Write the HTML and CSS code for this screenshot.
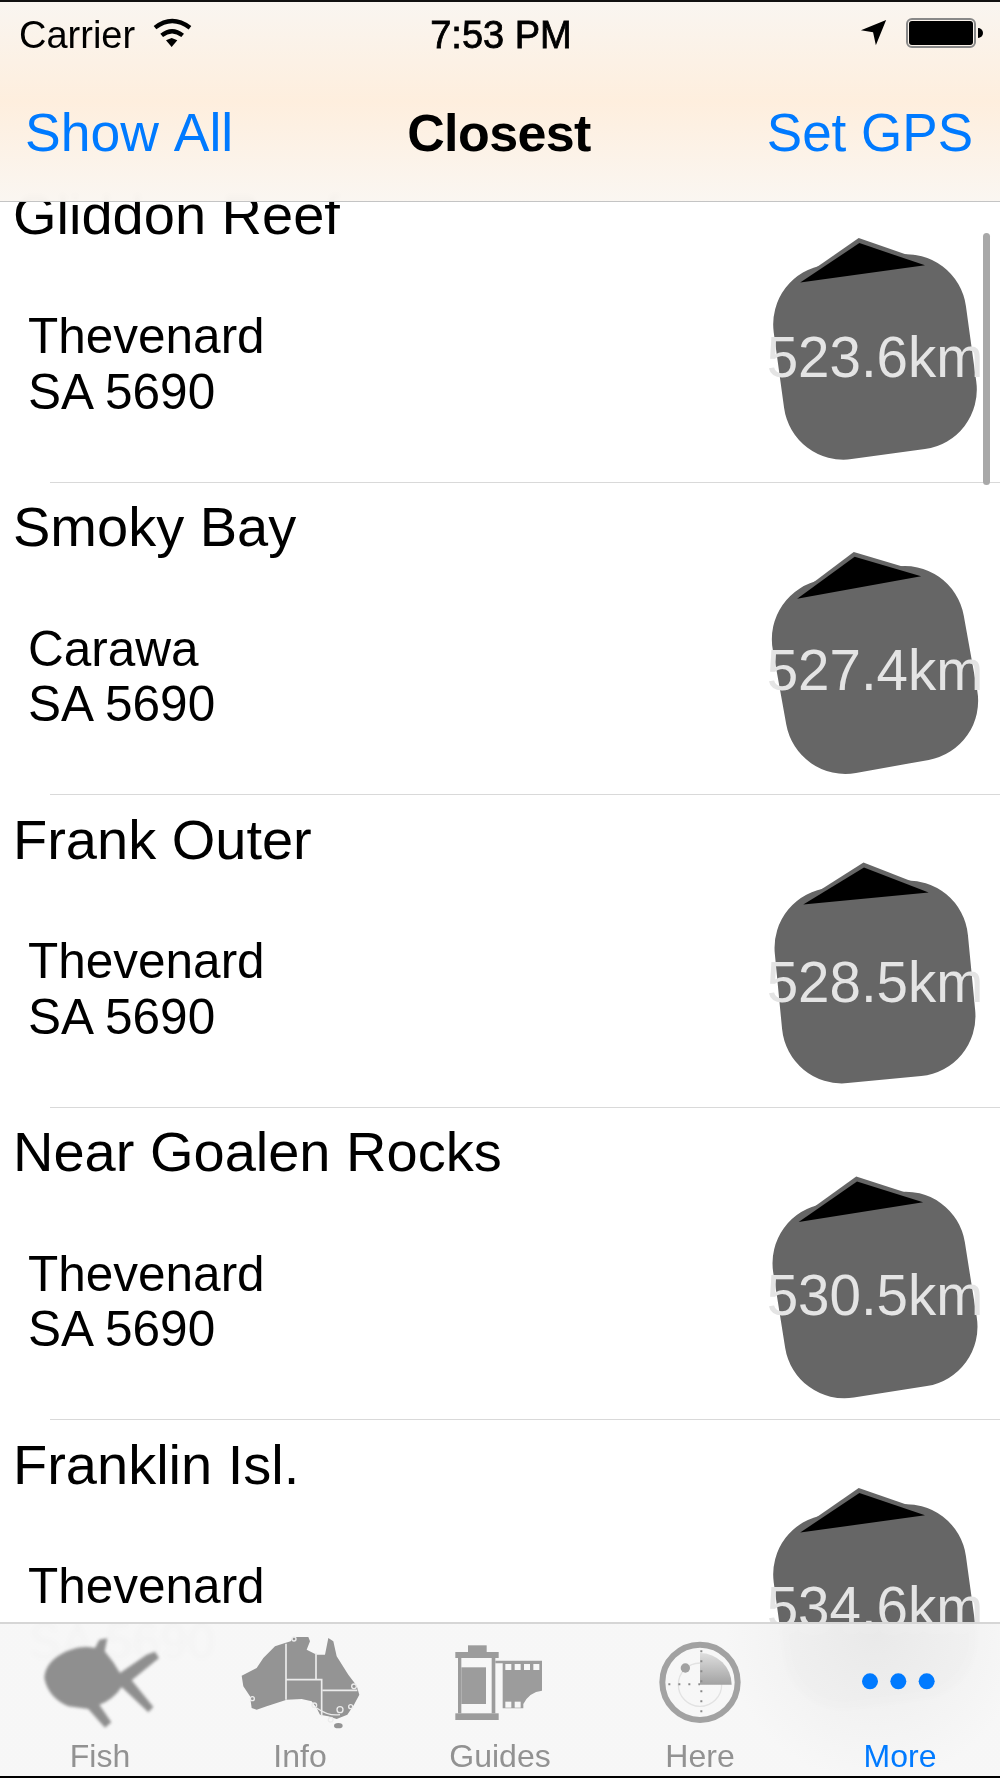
FILE: index.html
```html
<!DOCTYPE html>
<html lang="en">
<head>
  <meta charset="UTF-8">
  <meta name="viewport" content="width=device-width, initial-scale=1.0">
  <link rel="stylesheet" href="styles.css">
  <title>Closest</title>
</head>
<body>
  <svg class="defs" width="0" height="0">
    <symbol id="pointer" viewBox="-120 -130 240 260">
      <polygon points="0,-120 -79,-80 79,-80" fill="#666"/>
      <rect x="-97" y="-98" width="194" height="196" rx="60" fill="#666"/>
      <polygon points="0,-115 -64,-84 62,-84" fill="#000"/>
    </symbol>
  </svg>

  <div class="phone">
    <header class="top-bar">
      <div class="status-bar">
        <div class="status-left">
          <span>Carrier</span>
          <svg class="wifi" viewBox="0 0 210 150">
            <path d="M45 65 Q96 25 150 65" fill="none" stroke="#000" stroke-width="13"/>
            <path d="M65 88 Q96 63 128 88" fill="none" stroke="#000" stroke-width="13"/>
            <polygon points="78,103 95,96 112,103 95,123"/>
          </svg>
        </div>
        <span class="clock">7:53 PM</span>
        <div class="status-right">
          <svg class="arrow" viewBox="0 0 30 30"><polygon points="1,11 28,0 17,27 14,13"/></svg>
          <div class="battery"><div class="battery-fill"></div></div>
          <div class="battery-tip"></div>
        </div>
      </div>
      <nav class="nav-bar">
        <a class="nav-btn show-all">Show All</a>
        <h1 class="nav-title">Closest</h1>
        <a class="nav-btn">Set GPS</a>
      </nav>
    </header>

    <main class="list">
      <div class="row">
        <div class="row-title">Gliddon Reef</div>
        <div class="row-address">Thevenard<br>SA 5690</div>
        <div class="dist">
          <svg class="dist-shape" style="transform: rotate(-7.8deg)"><use href="#pointer"/></svg>
          <span class="dist-text">523.6km</span>
        </div>
      </div>
      <div class="sep"></div>
      <div class="row">
        <div class="row-title">Smoky Bay</div>
        <div class="row-address">Carawa<br>SA 5690</div>
        <div class="dist">
          <svg class="dist-shape" style="transform: rotate(-10.2deg)"><use href="#pointer"/></svg>
          <span class="dist-text">527.4km</span>
        </div>
      </div>
      <div class="sep"></div>
      <div class="row">
        <div class="row-title">Frank Outer</div>
        <div class="row-address">Thevenard<br>SA 5690</div>
        <div class="dist">
          <svg class="dist-shape" style="transform: rotate(-5.5deg)"><use href="#pointer"/></svg>
          <span class="dist-text">528.5km</span>
        </div>
      </div>
      <div class="sep"></div>
      <div class="row">
        <div class="row-title">Near Goalen Rocks</div>
        <div class="row-address">Thevenard<br>SA 5690</div>
        <div class="dist">
          <svg class="dist-shape" style="transform: rotate(-9deg)"><use href="#pointer"/></svg>
          <span class="dist-text">530.5km</span>
        </div>
      </div>
      <div class="sep"></div>
      <div class="row">
        <div class="row-title">Franklin Isl.</div>
        <div class="row-address">Thevenard<br>SA 5690</div>
        <div class="dist">
          <svg class="dist-shape" style="transform: rotate(-7.8deg)"><use href="#pointer"/></svg>
          <span class="dist-text">534.6km</span>
        </div>
      </div>
    </main>

    <div class="scrollbar"></div>

    <footer class="tab-bar">
      <div class="tab">
        <svg class="tab-icon fish" viewBox="90 100 420 300">
          <path fill="#8f8f8f" d="M133 235 Q135 185 200 155 Q245 135 285 145 L298 120 L322 116 L314 155 Q340 185 360 220 L440 165 L465 156 L477 175 L395 242 L460 322 L445 338 L365 262 Q340 300 298 315 L334 368 L315 384 L265 328 L205 320 Q145 295 133 235 Z"/>
        </svg>
        <span class="tab-label">Fish</span>
      </div>
      <div class="tab">
        <svg class="tab-icon" viewBox="690 100 420 300">
          <path fill="#949494" d="M725 228 L770 205 L790 175 L825 140 L855 130 L872 125 L880 112 L925 112 L930 125 L920 150 L950 165 L975 165 L985 115 L1000 125 L1010 170 L1045 225 L1070 258 L1078 285 L1062 315 L1042 345 L1010 358 L985 350 L960 345 L950 325 L935 305 L905 298 L860 300 L800 320 L770 330 L755 325 L750 290 L730 260 Z"/>
          <ellipse cx="1015" cy="378" rx="13" ry="8" fill="#949494"/>
          <path fill="none" stroke="#ececec" stroke-width="5" d="M858 132 V300 M948 160 V240 M860 240 H965 V350 M968 272 H1072"/>
          <g fill="none" stroke="#ececec" stroke-width="4">
            <circle cx="882" cy="118" r="6"/>
            <circle cx="757" cy="297" r="6"/>
            <circle cx="943" cy="317" r="7"/>
            <circle cx="1020" cy="330" r="9"/>
            <circle cx="1052" cy="321" r="6"/>
            <circle cx="1062" cy="260" r="7"/>
            <circle cx="992" cy="360" r="7"/>
            <path d="M950 325 Q985 350 1020 345"/>
          </g>
        </svg>
        <span class="tab-label">Info</span>
      </div>
      <div class="tab">
        <svg class="tab-icon" viewBox="-30 9 420 300">
          <g fill="#9c9c9c">
            <rect x="84" y="46" width="56" height="20"/>
            <rect x="46" y="66" width="130" height="18"/>
            <rect x="46" y="250" width="130" height="20"/>
            <rect x="54" y="84" width="10" height="166"/>
            <rect x="155" y="84" width="11" height="166"/>
            <rect x="64" y="112" width="74" height="110"/>
            <path d="M166 92 H306 V182 Q268 186 250 222 V235 H188 V100 H166 Z"/>
          </g>
          <g fill="#f7f7f7">
            <rect x="196" y="102" width="18" height="18"/>
            <rect x="224" y="102" width="18" height="18"/>
            <rect x="252" y="102" width="18" height="18"/>
            <rect x="280" y="102" width="18" height="18"/>
            <rect x="196" y="215" width="18" height="18"/>
            <rect x="224" y="215" width="18" height="18"/>
          </g>
        </svg>
        <span class="tab-label">Guides</span>
      </div>
      <div class="tab">
        <svg class="tab-icon" viewBox="390 100 420 300">
          <defs>
            <linearGradient id="sweep" x1="0" y1="0" x2="0" y2="1">
              <stop offset="0" stop-color="#dedede"/>
              <stop offset="1" stop-color="#a2a2a2"/>
            </linearGradient>
          </defs>
          <circle cx="600" cy="248" r="113" fill="none" stroke="#a2a2a2" stroke-width="18"/>
          <circle cx="600" cy="255" r="65" fill="none" stroke="#e2e2e2" stroke-width="4"/>
          <path d="M600 160 A95 95 0 0 1 695 255 H600 Z" fill="url(#sweep)"/>
          <circle cx="556" cy="205" r="14" fill="#a2a2a2"/>
          <path d="M604 152 V345 M505 254 H600" fill="none" stroke="#8a8a8a" stroke-width="6" stroke-dasharray="6 24"/>
        </svg>
        <span class="tab-label">Here</span>
      </div>
      <div class="tab active">
        <svg class="tab-icon" viewBox="990 100 420 300">
          <circle cx="1110" cy="245" r="24" fill="#007aff"/>
          <circle cx="1195" cy="245" r="24" fill="#007aff"/>
          <circle cx="1280" cy="245" r="24" fill="#007aff"/>
        </svg>
        <span class="tab-label">More</span>
      </div>
    </footer>
  </div>
</body>
</html>
```

FILE: styles.css
```css
body {
  margin: 0;
  padding: 0;
  background-color: #fff;
  font-family: "Liberation Sans", Arial, sans-serif;
  color: #000;
}

.defs {
  position: absolute;
}

.phone {
  position: relative;
  height: 1778px;
  overflow: hidden;
  background-color: #fff;
  filter: blur(0.5px);
}

/* top bars sit over the scrolled list */
.top-bar {
  position: absolute;
  top: 0;
  left: 0;
  right: 0;
  z-index: 2;
  height: 202px;
  box-sizing: border-box;
  border-top: 2px solid #111;
  border-bottom: 1px solid #c4c4c4;
  background: linear-gradient(rgba(249, 245, 240, 0.98), rgba(254, 238, 221, 0.98) 50%, rgba(250, 246, 241, 0.98));
  backdrop-filter: blur(3px);
}

.status-bar {
  display: grid;
  grid-template-columns: 1fr auto 1fr;
  align-items: center;
  height: 46px;
  padding: 10px 17px 0 19px;
  font-size: 38px;
  line-height: 46px;
}

.status-left {
  display: flex;
  align-items: center;
}

.wifi {
  width: 70px;
  height: 50px;
  margin-left: 5px;
  margin-top: -9px;
}

.clock {
  -webkit-text-stroke: 0.8px #000;
}

.status-right {
  display: flex;
  align-items: center;
  justify-content: flex-end;
}

.arrow {
  width: 28px;
  height: 28px;
  margin-right: 18px;
  margin-top: -2px;
}

.battery {
  width: 70px;
  height: 30px;
  box-sizing: border-box;
  padding: 1px;
  border: 2px solid #888;
  border-radius: 6px;
  margin-top: -4px;
}

.battery-fill {
  height: 100%;
  background-color: #000;
  border-radius: 3px;
}

.battery-tip {
  width: 5px;
  height: 10px;
  margin-left: 2px;
  margin-top: -4px;
  background-color: #000;
  border-radius: 0 5px 5px 0;
}

.nav-bar {
  display: grid;
  grid-template-columns: 1fr auto 1fr;
  align-items: center;
  margin-top: 45px;
  padding: 0 27px 0 25px;
  font-size: 53px;
  line-height: 60px;
}

.nav-btn {
  color: #007aff;
}

.nav-btn:last-child {
  text-align: right;
}

.show-all {
  font-kerning: none;
  font-size: 53.5px;
}

.nav-title {
  margin: 0;
  font-size: 52px;
  letter-spacing: -0.6px;
  font-weight: bold;
}

.list {
  margin-top: 170px;
}

.row {
  display: grid;
  grid-template-columns: 1fr 210px;
  grid-template-rows: 66px auto;
  height: 311.5px;
  box-sizing: border-box;
  padding: 11.5px 20px 0 13px;
}

.row-title {
  grid-column: 1;
  font-size: 56px;
  line-height: 66px;
  white-space: nowrap;
}

.row-address {
  grid-column: 1;
  padding: 60.5px 0 0 15px;
  font-size: 49.5px;
  line-height: 55.5px;
}

.dist {
  grid-column: 2;
  grid-row: 1 / 3;
  display: grid;
  grid-template-columns: 100%;
  justify-items: center;
  align-items: center;
  height: 260px;
  margin-top: 45.5px;
}

.dist-shape,
.dist-text {
  grid-area: 1 / 1;
}

.dist-shape {
  width: 240px;
  height: 260px;
}

.dist-text {
  position: relative;
  padding-top: 2px;
  font-size: 56.5px;
  line-height: 60px;
  color: #e4e4e4;
  white-space: nowrap;
}

.sep {
  height: 1px;
  margin-left: 50px;
  background-color: #d9d9d9;
}

.scrollbar {
  position: absolute;
  top: 233px;
  left: 983px;
  width: 7px;
  height: 252px;
  border-radius: 4px;
  background-color: #a8a8a8;
}

.tab-bar {
  position: absolute;
  left: 0;
  right: 0;
  bottom: 0;
  z-index: 2;
  display: grid;
  grid-template-columns: repeat(5, 1fr);
  height: 156px;
  box-sizing: border-box;
  padding-top: 9px;
  border-top: 2px solid #d6d6d6;
  border-bottom: 2px solid #000;
  background: radial-gradient(circle 150px at 875px 10px, rgba(236, 236, 236, 0.985), rgba(247, 247, 247, 0.985));
  backdrop-filter: blur(3px);
}

.tab {
  display: flex;
  flex-direction: column;
  align-items: center;
  color: #929292;
}

.tab.active {
  color: #007aff;
}

.tab-icon {
  width: 140px;
  height: 100px;
}

.fish {
  filter: blur(1.5px);
}

.tab-label {
  margin-top: 3px;
  font-size: 32px;
  line-height: 40px;
}
```
